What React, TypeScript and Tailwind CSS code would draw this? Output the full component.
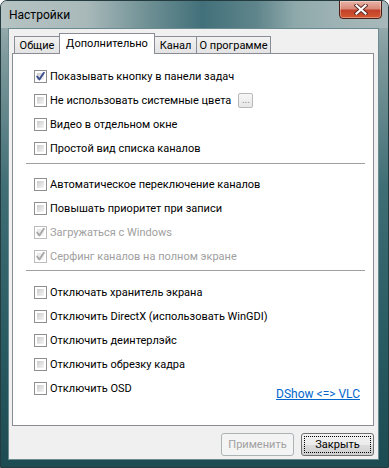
import React from "react";

function Box({ checked = false, disabled = false }: { checked?: boolean; disabled?: boolean }) {
  return (
    <span
      className={`relative block w-[13px] h-[13px] shrink-0 border bg-white p-[2px] ${
        disabled ? "border-[#bcbcbc]" : "border-[#8e8f8f]"
      }`}
    >
      <span
        className={`block w-full h-full ${
          disabled
            ? "bg-[linear-gradient(135deg,#e6e6e6,#f7f7f7)]"
            : "bg-[linear-gradient(135deg,#cbcbcb,#f6f6f6)]"
        }`}
      />
      {checked && (
        <svg className="absolute left-[-1px] top-[-1px]" width="13" height="13" viewBox="0 0 13 13">
          <path
            d="M3.2 6.6 L5.4 9.4 L9.9 2.8"
            fill="none"
            stroke={disabled ? "#a9a9a9" : "#3b4f8e"}
            strokeWidth="1.9"
            strokeLinecap="round"
            strokeLinejoin="round"
          />
        </svg>
      )}
    </span>
  );
}

function Row({
  label,
  checked = false,
  disabled = false,
  children,
}: {
  label: string;
  checked?: boolean;
  disabled?: boolean;
  children?: React.ReactNode;
}) {
  return (
    <div className="flex h-[24px] items-center pl-[8px]">
      <Box checked={checked} disabled={disabled} />
      <span className={`ml-[3px] whitespace-nowrap leading-none ${disabled ? "text-[#a0a0a0]" : "text-black"}`}>
        {label}
      </span>
      {children}
    </div>
  );
}

function Sep({ mt, mb }: { mt: string; mb: string }) {
  return <div className={`h-px bg-[#a0a0a0] mr-[8px] ${mt} ${mb}`} />;
}

export default function App() {
  return (
    <div className="w-[389px] h-[468px] flex flex-col overflow-hidden rounded-t-[7px] border border-[#243c40] bg-[linear-gradient(180deg,#a8b8ba_0%,#7e999c_12%,#3f6e75_40%,#285a61_75%,#1d4b52_100%)] font-['Roboto',sans-serif] text-[11px]">
      {/* title bar */}
      <div className="relative h-[27px] shrink-0 flex items-start justify-between bg-[linear-gradient(90deg,#b6c3c3_0%,#a9b9ba_22%,#6e9094_38%,#42707a_52%,#5f858b_66%,#8ea9ab_76%,#9db2b4_86%,#a8b8ba_100%)]">
        <span className="pl-[8px] pt-[8px] text-black leading-none text-[12px]">Настройки</span>
        <div className="mr-[6px] mt-[-1px] w-[43px] h-[19px] rounded-b-[4px] border border-[#4b2019] bg-[linear-gradient(180deg,#e8b3a5_0%,#d98a7a_45%,#c2412a_55%,#d4582f_100%)] flex items-center justify-center shadow-[inset_0_0_0_1px_rgba(255,255,255,0.35)]">
          <svg width="14" height="11" viewBox="0 0 14 11">
            <path d="M2.5 1.5 L11.5 9.5 M11.5 1.5 L2.5 9.5" stroke="#5a2a22" strokeWidth="4" strokeLinecap="square" />
            <path d="M2.5 1.5 L11.5 9.5 M11.5 1.5 L2.5 9.5" stroke="#ffffff" strokeWidth="2.2" strokeLinecap="square" />
          </svg>
        </div>
      </div>

      {/* client area */}
      <div className="ml-[7px] mr-[9px] mb-[7px] flex-1 flex flex-col border border-[#6b8b90] bg-[#f0f0f0] pl-[3px] pr-[4px] pt-[3px]">
        {/* tabs */}
        <div className="flex items-end h-[21px] pl-[2px] relative z-10 whitespace-nowrap">
          <div className="h-[17px] w-[46px] border border-b-0 border-[#898c95] bg-[linear-gradient(180deg,#f2f2f2,#e3e3e3)] flex items-center justify-center leading-none">
            Общие
          </div>
          <div className="h-[21px] w-[96px] -ml-px border border-b-0 border-[#898c95] bg-white flex items-center justify-center leading-none pb-[2px] -mb-px relative z-10">
            Дополнительно
          </div>
          <div className="h-[17px] w-[43px] -ml-px border border-b-0 border-[#898c95] bg-[linear-gradient(180deg,#f2f2f2,#e3e3e3)] flex items-center justify-center leading-none">
            Канал
          </div>
          <div className="h-[17px] w-[75px] -ml-px border border-b-0 border-[#898c95] bg-[linear-gradient(180deg,#f2f2f2,#e3e3e3)] flex items-center justify-center leading-none">
            О программе
          </div>
        </div>

        {/* panel */}
        <div className="h-[373px] border border-[#898c95] bg-white pl-[13px] pt-[10px] flex flex-col">
          <Row label="Показывать кнопку в панели задач" checked />
          <Row label="Не использовать системные цвета">
            <span className="ml-[7px] w-[15px] h-[15px] rounded-[2px] border border-[#b9b9b9] bg-[linear-gradient(180deg,#f7f7f7,#e6e6e6)] flex items-end justify-center text-[#8a8a8a] text-[10px] leading-[10px] pb-[2px]">
              ...
            </span>
          </Row>
          <Row label="Видео в отдельном окне" />
          <Row label="Простой вид списка каналов" />
          <Sep mt="mt-[3px]" mb="mb-[8px]" />
          <Row label="Автоматическое переключение каналов" />
          <Row label="Повышать приоритет при записи" />
          <Row label="Загружаться с Windows" checked disabled />
          <Row label="Серфинг каналов на полном экране" checked disabled />
          <Sep mt="mt-[2px]" mb="mb-[9px]" />
          <Row label="Отключать хранитель экрана" />
          <Row label="Отключить DirectX (использовать WinGDI)" />
          <Row label="Отключить деинтерлэйс" />
          <Row label="Отключить обрезку кадра" />
          <div className="flex items-center justify-between pr-[13px]">
            <Row label="Отключить OSD" />
            <a className="text-[#0066cc] text-[12px] underline leading-none translate-y-[6px] cursor-pointer whitespace-nowrap">
              DShow &lt;=&gt; VLC
            </a>
          </div>
        </div>

        {/* buttons */}
        <div className="flex justify-end gap-[7px] mt-[7px]">
          <button className="w-[73px] h-[23px] rounded-[3px] border border-[#adb2b5] bg-[#f4f4f4] text-[#a0a0a0] leading-none">
            Применить
          </button>
          <button className="w-[73px] h-[23px] rounded-[3px] border border-[#707070] bg-[linear-gradient(180deg,#f2f2f2_0%,#ebebeb_50%,#dddddd_51%,#cfcfcf_100%)] p-[2px] text-black leading-none">
            <span className="w-full h-full flex items-center justify-center border border-dotted border-black">
              Закрыть
            </span>
          </button>
        </div>
      </div>
    </div>
  );
}
